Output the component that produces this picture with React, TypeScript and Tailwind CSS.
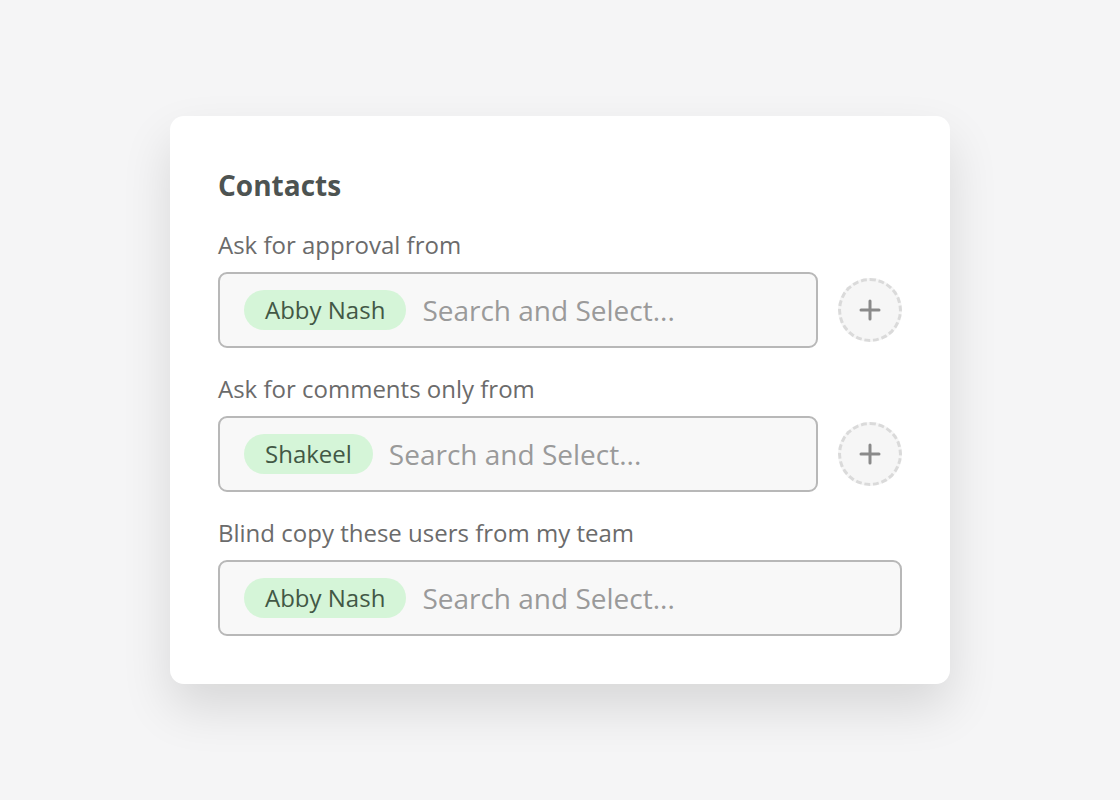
import React from "react";

function Plus() {
  return (
    <div className="w-16 h-16 shrink-0 rounded-full border-[3px] border-dashed border-[#dadada] bg-[#f6f6f6] flex items-center justify-center">
      <svg width="22" height="22" viewBox="0 0 22 22">
        <path d="M11 2v18M2 11h18" stroke="#8a8a8a" strokeWidth="3" strokeLinecap="round" />
      </svg>
    </div>
  );
}

function Field({ label, chip, plus }: { label: string; chip: string; plus: boolean }) {
  return (
    <div className="flex flex-col">
      <div className="text-[24px] leading-[28px] text-[#6b6b6b]">{label}</div>
      <div className="mt-[13px] flex items-center gap-5">
        <div className="flex-1 h-[76px] rounded-[9px] border-2 border-[#b8b8b8] bg-[#f8f8f8] flex items-center pl-6">
          <span className="h-10 px-[21px] rounded-full bg-[#d5f5d8] text-[#425845] text-[24px] leading-10">{chip}</span>
          <span className="ml-4 text-[28px] leading-10 text-[#9a9a9a]">Search and Select...</span>
        </div>
        {plus && <Plus />}
      </div>
    </div>
  );
}

export default function App() {
  return (
    <div className="w-[1120px] h-[800px] bg-[#f5f5f6] flex items-start justify-center pt-[116px]" style={{ fontFamily: '"Open Sans", sans-serif' }}>
      <div className="w-[780px] bg-white rounded-[14px] px-12 pt-[53px] pb-12 shadow-[0_24px_50px_rgba(0,0,0,0.12)]">
        <h2 className="text-[28px] leading-8 font-bold text-[#4d5351]">Contacts</h2>
        <div className="mt-[30px] flex flex-col gap-[27px]">
          <Field label="Ask for approval from" chip="Abby Nash" plus />
          <Field label="Ask for comments only from" chip="Shakeel" plus />
          <Field label="Blind copy these users from my team" chip="Abby Nash" plus={false} />
        </div>
      </div>
    </div>
  );
}
